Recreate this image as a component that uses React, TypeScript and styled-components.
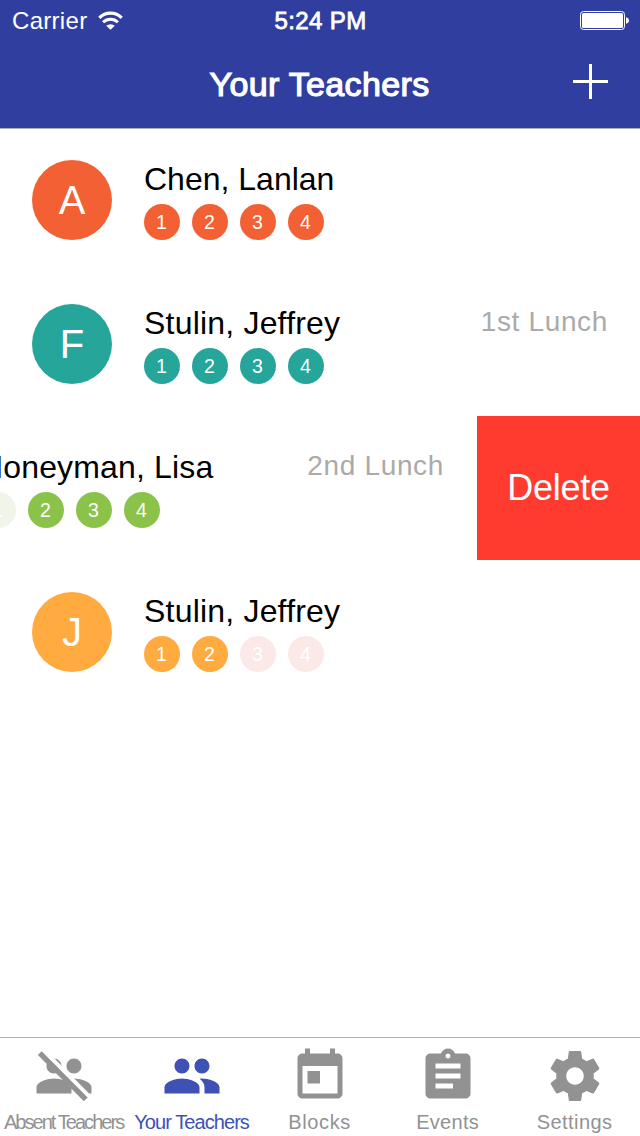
import React from "react";
import styled, { createGlobalStyle } from "styled-components";

const GlobalStyle = createGlobalStyle`
  *, *::before, *::after { box-sizing: border-box; }
  body {
    margin: 0;
    background: #ffffff;
    font-family: "Liberation Sans", Arial, sans-serif;
  }
`;

const Screen = styled.div`
  width: 640px;
  height: 1136px;
  display: flex;
  flex-direction: column;
  overflow: hidden;
  background: #ffffff;
`;

const Header = styled.header`
  flex: none;
  height: 128px;
  background: #303f9f;
  color: #ffffff;
  box-shadow: 0 1px 0 #acacac;
`;

const StatusBar = styled.div`
  height: 40px;
  padding: 0 11px 0 12px;
  display: grid;
  grid-template-columns: 1fr auto 1fr;
  align-items: center;
`;

const Carrier = styled.div`
  display: flex;
  align-items: center;
  gap: 11px;
  font-size: 24px;
  line-height: 42px;
  letter-spacing: 0.3px;
`;

const Clock = styled.div`
  font-size: 24px;
  line-height: 42px;
  letter-spacing: 0.4px;
  -webkit-text-stroke: 0.8px #ffffff;
`;

const BatteryIcon = styled.svg`
  display: block;
  justify-self: end;
  margin-bottom: 2px;
`;

const NavBar = styled.div`
  height: 88px;
  padding: 0 32px;
  display: grid;
  grid-template-columns: 1fr auto 1fr;
  align-items: center;
`;

const NavTitle = styled.h1`
  grid-column: 2;
  margin: 0 1px 0 0;
  font-size: 34px;
  font-weight: 400;
  line-height: 88px;
  letter-spacing: 0.35px;
  -webkit-text-stroke: 1.2px #ffffff;
`;

const AddButton = styled.button`
  justify-self: end;
  margin: 0 0 5px;
  padding: 0;
  border: 0;
  background: none;
  color: inherit;
  svg { display: block; }
`;

const List = styled.main`
  flex: 1;
  overflow: hidden;
`;

const Row = styled.div<{ $open?: boolean }>`
  display: flex;
  height: 144px;
  margin-left: ${(p) => (p.$open ? "-164px" : "0")};
`;

const RowContent = styled.div`
  flex: none;
  width: 640px;
  padding: 32px;
  display: flex;
  align-items: flex-start;
  gap: 32px;
`;

const Avatar = styled.div<{ $color: string }>`
  flex: none;
  width: 80px;
  height: 80px;
  border-radius: 50%;
  background: ${(p) => p.$color};
  color: #ffffff;
  font-size: 40px;
  line-height: 81px;
  text-align: center;
`;

const Details = styled.div`
  flex: 1;
  display: flex;
  flex-direction: column;
  gap: 6px;
`;

const Name = styled.div<{ $spacing?: number }>`
  height: 38px;
  font-size: 32px;
  line-height: 38px;
  letter-spacing: ${(p) => p.$spacing ?? 0}px;
  color: #000000;
  white-space: nowrap;
`;

const Blocks = styled.div`
  display: flex;
  gap: 12px;
`;

const Block = styled.div<{ $color: string }>`
  width: 36px;
  height: 36px;
  padding-right: 1px;
  border-radius: 50%;
  background: ${(p) => p.$color};
  color: #ffffff;
  font-size: 19.5px;
  line-height: 37px;
  text-align: center;
`;

const Lunch = styled.div`
  font-size: 28px;
  line-height: 34px;
  padding-top: 1px;
  letter-spacing: 0.65px;
  color: #aaaaaa;
  white-space: nowrap;
`;

const DeleteButton = styled.button`
  flex: none;
  width: 163px;
  height: 144px;
  margin: 0 0 0 1px;
  padding: 0;
  border: 0;
  background: #ff3b30;
  color: #ffffff;
  font-family: inherit;
  font-size: 36px;
  line-height: 144px;
  letter-spacing: -0.3px;
  text-align: center;
`;

const TabBar = styled.nav`
  flex: none;
  height: 99px;
  border-top: 1px solid #b2b2b2;
  display: grid;
  grid-template-columns: repeat(5, 128px);
`;

const Tab = styled.div<{ $active?: boolean }>`
  padding-top: 8px;
  display: flex;
  flex-direction: column;
  align-items: center;
  color: ${(p) => (p.$active ? "#3f51b5" : "#929292")};
  svg { display: block; flex: none; }
  &:last-child { padding-right: 2px; }
`;

const TabLabel = styled.span<{ $spacing: number }>`
  margin-top: 4px;
  font-size: 20px;
  line-height: 24px;
  letter-spacing: ${(p) => p.$spacing}px;
  margin-right: 0.8px;
  white-space: nowrap;
`;

const GROUP =
  "M16 11c1.66 0 2.99-1.34 2.99-3S17.66 5 16 5c-1.66 0-3 1.34-3 3s1.34 3 3 3zm-8 0c1.66 0 2.99-1.34 2.99-3S9.66 5 8 5C6.34 5 5 6.34 5 8s1.34 3 3 3zm0 2c-2.33 0-7 1.17-7 3.5V19h14v-2.5c0-2.33-4.67-3.5-7-3.5zm8 0c-.29 0-.62.02-.97.05 1.16.84 1.97 1.97 1.97 3.45V19h6v-2.5c0-2.33-4.67-3.5-7-3.5z";
const TODAY =
  "M19 3h-1V1h-2v2H8V1H6v2H5c-1.11 0-1.99.9-1.99 2L3 19c0 1.1.89 2 2 2h14c1.1 0 2-.9 2-2V5c0-1.1-.9-2-2-2zm0 16H5V8h14v11zM7 10h5v5H7z";
const ASSIGNMENT =
  "M19 3h-4.18C14.4 1.84 13.3 1 12 1c-1.3 0-2.4.84-2.82 2H5c-1.1 0-2 .9-2 2v14c0 1.1.9 2 2 2h14c1.1 0 2-.9 2-2V5c0-1.1-.9-2-2-2zm-7 0c.55 0 1 .45 1 1s-.45 1-1 1-1-.45-1-1 .45-1 1-1zm2 14H7v-2h7v2zm3-4H7v-2h10v2zm0-4H7V7h10v2z";
const SETTINGS =
  "M19.43 12.98c.04-.32.07-.64.07-.98s-.03-.66-.07-.98l2.11-1.65c.19-.15.24-.42.12-.64l-2-3.46c-.12-.22-.39-.3-.61-.22l-2.49 1c-.52-.4-1.08-.73-1.69-.98l-.38-2.65C14.46 2.18 14.25 2 14 2h-4c-.25 0-.46.18-.49.42l-.38 2.65c-.61.25-1.17.59-1.69.98l-2.49-1c-.23-.09-.49 0-.61.22l-2 3.46c-.13.22-.07.49.12.64l2.11 1.65c-.04.32-.07.65-.07.98s.03.66.07.98l-2.11 1.65c-.19.15-.24.42-.12.64l2 3.46c.12.22.39.3.61.22l2.49-1c.52.4 1.08.73 1.69.98l.38 2.65c.03.24.24.42.49.42h4c.25 0 .46-.18.49-.42l.38-2.65c.61-.25 1.17-.59 1.69-.98l2.49 1c.23.09.49 0 .61-.22l2-3.46c.12-.22.07-.49-.12-.64l-2.11-1.65zM12 15.5c-1.93 0-3.5-1.57-3.5-3.5s1.57-3.5 3.5-3.5 3.5 1.57 3.5 3.5-1.57 3.5-3.5 3.5z";

function TabIcon({ path, slashed }: { path: string; slashed?: boolean }) {
  return (
    <svg width="60" height="60" viewBox="0 0 24 24" fill="currentColor">
      <path d={path} />
      {slashed && (
        <>
          <path d="M2.93 2.13L5.33 2.13L23.7 20.7L21.3 20.7Z" fill="#ffffff" />
          <path d="M3.05 2.1L1.55 3.6L19.95 22.05L21.45 20.55Z" />
        </>
      )}
    </svg>
  );
}

interface Teacher {
  initial: string;
  name: string;
  color: string;
  faded: string;
  active: number[];
  lunch?: string;
  spacing?: number;
  open?: boolean;
}

const teachers: Teacher[] = [
  { initial: "A", name: "Chen, Lanlan", color: "#f26033", faded: "#fbe9e7", active: [1, 2, 3, 4], spacing: 0 },
  { initial: "F", name: "Stulin, Jeffrey", color: "#26a69a", faded: "#e0f2f1", active: [1, 2, 3, 4], lunch: "1st Lunch", spacing: 0.2 },
  { initial: "L", name: "Honeyman, Lisa", color: "#8bc34a", faded: "#f1f5e9", active: [2, 3, 4], lunch: "2nd Lunch", spacing: 0.15, open: true },
  { initial: "J", name: "Stulin, Jeffrey", color: "#ffab40", faded: "#fbe9e7", active: [1, 2], spacing: 0.2 },
];

const tabs = [
  { label: "Absent Teachers", path: GROUP, slashed: true, spacing: -1.95 },
  { label: "Your Teachers", path: GROUP, active: true, spacing: -0.93 },
  { label: "Blocks", path: TODAY, spacing: 0.6 },
  { label: "Events", path: ASSIGNMENT, spacing: 0.3 },
  { label: "Settings", path: SETTINGS, spacing: 0.45 },
];

export default function App() {
  return (
    <Screen>
      <GlobalStyle />
      <Header>
        <StatusBar>
          <Carrier>
            Carrier
            <svg width="25" height="20" viewBox="0 0 25 20" fill="none" stroke="#ffffff">
              <path d="M1.3 6.8A15.7 15.7 0 0 1 23.7 6.8" strokeWidth="3.3" />
              <path d="M5.1 11.3A10.6 10.6 0 0 1 19.9 11.3" strokeWidth="3" />
              <path d="M12.5 18.8L8.2 14.8A6.4 6.4 0 0 1 16.8 14.8Z" fill="#ffffff" stroke="none" />
            </svg>
          </Carrier>
          <Clock>5:24 PM</Clock>
          <BatteryIcon width="49" height="19" viewBox="0 0 49 19">
            <rect x="0.5" y="0.5" width="44" height="18" rx="3" fill="none" stroke="#ffffff" />
            <rect x="2" y="2" width="41" height="15" rx="1.5" fill="#ffffff" />
            <path d="M46 6.2C48 6.6 49 8 49 9.5S48 12.4 46 12.8Z" fill="#ffffff" />
          </BatteryIcon>
        </StatusBar>
        <NavBar>
          <NavTitle>Your Teachers</NavTitle>
          <AddButton aria-label="Add teacher">
            <svg width="35" height="35" viewBox="0 0 35 35" fill="#ffffff">
              <rect x="16" y="0" width="3" height="35" />
              <rect x="0" y="16" width="35" height="3" />
            </svg>
          </AddButton>
        </NavBar>
      </Header>
      <List>
        {teachers.map((t, i) => (
          <Row key={i} $open={t.open}>
            <RowContent>
              <Avatar $color={t.color}>{t.initial}</Avatar>
              <Details>
                <Name $spacing={t.spacing}>{t.name}</Name>
                <Blocks>
                  {[1, 2, 3, 4].map((n) => (
                    <Block key={n} $color={t.active.includes(n) ? t.color : t.faded}>
                      {n}
                    </Block>
                  ))}
                </Blocks>
              </Details>
              {t.lunch && <Lunch>{t.lunch}</Lunch>}
            </RowContent>
            {t.open && <DeleteButton>Delete</DeleteButton>}
          </Row>
        ))}
      </List>
      <TabBar>
        {tabs.map((t) => (
          <Tab key={t.label} $active={t.active}>
            <TabIcon path={t.path} slashed={t.slashed} />
            <TabLabel $spacing={t.spacing}>{t.label}</TabLabel>
          </Tab>
        ))}
      </TabBar>
    </Screen>
  );
}
